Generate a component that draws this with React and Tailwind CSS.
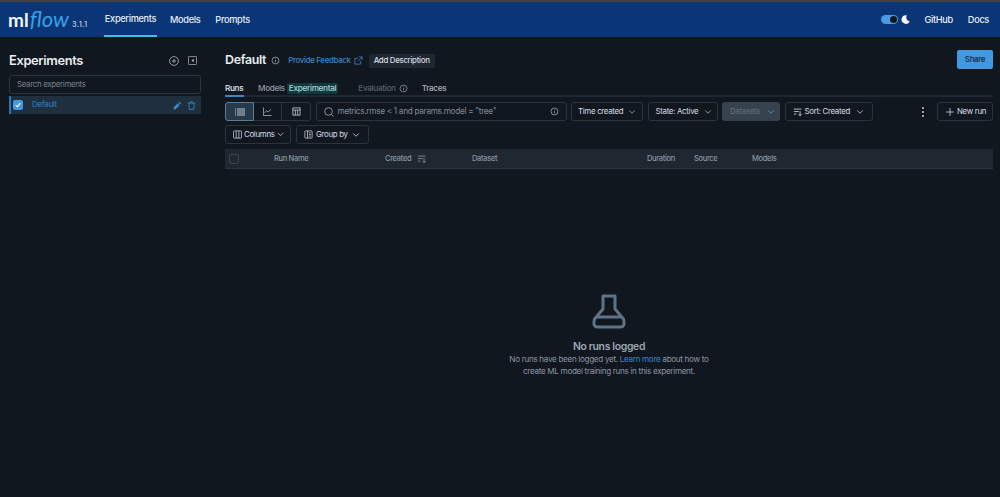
import React from "react";
import { ChevronDown, Plus } from "lucide-react";

function SortIcon({ className }) {
  return (
    <svg viewBox="0 0 12 12" className={className} fill="none" stroke="currentColor" strokeWidth="1">
      <path d="M1 2.5h9M1 5.5h6M1 8.5h3M8.5 5v5.5M6.8 8.8l1.7 1.7 1.7-1.7" />
    </svg>
  );
}

function InfoIcon({ className }) {
  return (
    <svg viewBox="0 0 12 12" className={className} fill="none" stroke="currentColor" strokeWidth="1">
      <circle cx="6" cy="6" r="4.6" />
      <path d="M6 5.4v3M6 3.4v1" />
    </svg>
  );
}

function ToolButton({ children, className = "" }) {
  return (
    <div className={"h-[19px] flex items-center whitespace-nowrap rounded-[3px] border border-[#2a343f] text-[7.9px] text-[#d5dde4] " + className}>
      {children}
    </div>
  );
}

function Sidebar() {
  return (
    <aside className="w-[225px] shrink-0 pl-[9px] pr-[24px] pt-[16px]">
      <div className="h-[15px] flex items-center justify-between pr-[4px]">
        <h2 className="text-[12.8px] leading-[15px] font-semibold text-[#e9edf0]">Experiments</h2>
        <div className="flex items-center gap-[9px] text-[#b3bcc5]">
          <svg viewBox="0 0 10 10" className="w-[10px] h-[10px]" fill="none" stroke="currentColor" strokeWidth="0.8">
            <circle cx="5" cy="5" r="4.4" />
            <path d="M5 3v4M3 5h4" />
          </svg>
          <svg viewBox="0 0 10 10" className="w-[9px] h-[9px]" fill="none" stroke="currentColor" strokeWidth="0.8">
            <rect x="0.5" y="0.5" width="9" height="9" rx="0.8" />
            <path d="M6.4 3v4L3.8 5z" fill="currentColor" stroke="none" />
          </svg>
        </div>
      </div>
      <div className="mt-[7px] h-[19px] rounded-[3px] border border-[#2a343f] flex items-center pl-[7px] text-[7.9px] text-[#76828e]">
        Search experiments
      </div>
      <div className="mt-[2px] h-[18px] bg-[#1f2f3e] border-l-[2px] border-[#2a74b8] flex items-center pl-[2px] pr-[5px]">
        <div className="w-[10px] h-[10px] rounded-[2px] bg-[#4299e0] flex items-center justify-center">
          <svg viewBox="0 0 10 10" className="w-[8px] h-[8px]" fill="none" stroke="#fff" strokeWidth="1.4">
            <path d="M2 5.2l2.2 2L8 2.8" />
          </svg>
        </div>
        <span className="ml-[9px] text-[7.9px] text-[#2a74b8] font-medium">Default</span>
        <div className="ml-auto flex items-center gap-[5px] text-[#3c88cc]">
          <svg viewBox="0 0 10 10" className="w-[9px] h-[9px]" fill="currentColor">
            <path d="M7 .9l2.1 2.1-1 1L6 1.9zM5.3 2.6l2.1 2.1L3 9.1.6 9.4.9 7z" />
          </svg>
          <svg viewBox="0 0 10 10" className="w-[9px] h-[9px]" fill="none" stroke="currentColor" strokeWidth="0.9">
            <path d="M1 2.3h8M3.6 2.3V1h2.8v1.3M2 2.3l.5 7h5l.5-7" />
          </svg>
        </div>
      </div>
    </aside>
  );
}

function Toolbar() {
  return (
    <div className="mt-[5px] flex items-center gap-[4.5px]">
      <div className="flex h-[19px]">
        <div className="w-[29px] h-[19px] rounded-l-[3px] bg-[#263a4c] border border-[#5d7b94] flex items-center justify-center text-[#c9d6e0]">
          <svg viewBox="0 0 10 8" className="w-[10px] h-[8px]" fill="none" stroke="currentColor" strokeWidth="0.9">
            <path d="M0 1h1M2 1h8M0 3h1M2 3h8M0 5h1M2 5h8M0 7h1M2 7h8" />
          </svg>
        </div>
        <div className="w-[28px] h-[19px] border-y border-r border-[#2a343f] flex items-center justify-center text-[#c2cbd3]">
          <svg viewBox="0 0 10 10" className="w-[9px] h-[9px]" fill="none" stroke="currentColor" strokeWidth="0.8">
            <path d="M.5.5v9h9M1.8 6.5l2.2-2.4 1.8 1.4L9 2.5" />
          </svg>
        </div>
        <div className="w-[29px] h-[19px] rounded-r-[3px] border-y border-r border-[#2a343f] flex items-center justify-center text-[#c2cbd3]">
          <svg viewBox="0 0 10 10" className="w-[9px] h-[9px]" fill="none" stroke="currentColor" strokeWidth="0.9">
            <rect x="1" y="1" width="8" height="8" />
            <path d="M1 3.4h8M3.7 3.4V9M6.3 3.4V9" />
          </svg>
        </div>
      </div>
      <div className="w-[251px] h-[19px] rounded-[3px] border border-[#2a343f] flex items-center pl-[7px] pr-[7px] text-[8.25px] text-[#7f8b96]">
        <svg viewBox="0 0 10 10" className="w-[10px] h-[10px] text-[#a5afb8]" fill="none" stroke="currentColor" strokeWidth="0.8">
          <circle cx="4.5" cy="4.5" r="3.8" />
          <path d="M7.3 7.3l2.3 2.3" />
        </svg>
        <span className="ml-[4px]">metrics.rmse &lt; 1 and params.model = "tree"</span>
        <InfoIcon className="ml-auto w-[9px] h-[9px] text-[#a5afb8]" />
      </div>
      <ToolButton className="w-[72px] pl-[6px]">
        Time created
        <ChevronDown className="ml-auto mr-[5px] w-[10px] h-[10px] text-[#a5afb8]" />
      </ToolButton>
      <ToolButton className="w-[70px] pl-[7px]">
        State: Active
        <ChevronDown className="ml-auto mr-[4px] w-[10px] h-[10px] text-[#a5afb8]" />
      </ToolButton>
      <div className="w-[58px] h-[19px] rounded-[3px] bg-[#36424e] flex items-center pl-[8px] text-[7.9px] text-[#64717e]">
        Datasets
        <ChevronDown className="ml-auto mr-[4px] w-[10px] h-[10px] text-[#8793a0]" />
      </div>
      <ToolButton className="w-[88px] pl-[7px]">
        <SortIcon className="w-[10px] h-[10px] mr-[2px] text-[#d5dde4]" />
        Sort: Created
        <ChevronDown className="ml-auto mr-[7px] w-[10px] h-[10px] text-[#c2cbd3]" />
      </ToolButton>
      <div className="ml-auto mr-[9px] flex flex-col gap-[2px]">
        <div className="w-[2px] h-[2px] rounded-full bg-[#c2cbd3]"></div>
        <div className="w-[2px] h-[2px] rounded-full bg-[#c2cbd3]"></div>
        <div className="w-[2px] h-[2px] rounded-full bg-[#c2cbd3]"></div>
      </div>
      <ToolButton className="w-[56px] pl-[6px]">
        <Plus className="w-[12px] h-[12px] mr-[1px]" strokeWidth={1.5} />
        New run
      </ToolButton>
    </div>
  );
}

function TableHead() {
  return (
    <div className="mt-[5px] h-[20px] bg-[#1f2831] border-b border-[#2a343f] flex items-center text-[7.5px] font-medium text-[#8a96a2]">
      <div className="ml-[4px] w-[10px] h-[10px] rounded-[2px] border border-[#3a4550]"></div>
      <span className="ml-[35px] w-[111px]">Run Name</span>
      <span className="flex items-center w-[87px]">
        Created
        <SortIcon className="ml-[6px] w-[10px] h-[10px]" />
      </span>
      <span className="w-[175px]">Dataset</span>
      <span className="w-[47px]">Duration</span>
      <span className="w-[58px]">Source</span>
      <span>Models</span>
    </div>
  );
}

export default function App() {
  return (
    <div className="h-[497px] w-[1000px] flex flex-col bg-[#11171f] overflow-hidden tracking-[-0.02em] font-['Inter',sans-serif]">
      <div className="h-[2px] bg-[#3f3f3f]"></div>
      <header className="h-[35px] bg-[#0a3577] flex items-center pl-[8px] pr-[11px] text-white">
        <div className="flex items-baseline w-[96px] tracking-normal">
          <span className="text-[19px] leading-[26px] font-bold text-[#f3f6fa] font-['Lato',sans-serif]">ml</span>
          <span className="ml-[1px] text-[22px] leading-[26px] italic text-[#36a2e6] font-['Lato',sans-serif]">flow</span>
          <span className="ml-[3px] text-[7.5px] font-medium tracking-[0.3px] text-[#c5d2e2]">3.1.1</span>
        </div>
        <nav className="flex h-[35px] text-[9.2px] font-medium text-[#e6edf5]">
          <div className="w-[53px] flex items-center justify-center border-b-[2px] border-[#3ec1ee]">Experiments</div>
          <div className="ml-[13px] flex items-center">Models</div>
          <div className="ml-[15px] flex items-center">Prompts</div>
        </nav>
        <div className="ml-auto flex items-center text-[9.2px] font-medium text-[#e6edf5]">
          <div className="w-[17px] h-[9px] rounded-full bg-[#4a9ae4] flex items-center justify-end pr-[1px]">
            <div className="w-[7px] h-[7px] rounded-full bg-[#11171f]"></div>
          </div>
          <svg viewBox="0 0 10 10" className="ml-[3px] w-[9px] h-[9px]" fill="#f3f6fa">
            <path d="M6.5.4A4.8 4.8 0 1 0 9.8 7 4.4 4.4 0 0 1 6.5.4z" />
          </svg>
          <span className="ml-[14px]">GitHub</span>
          <span className="ml-[15px]">Docs</span>
        </div>
      </header>
      <div className="flex flex-1 min-h-0">
        <Sidebar />
        <main className="flex-1 pr-[7px] flex flex-col">
          <div className="pt-[15px] h-[32px] flex items-center">
            <h1 className="text-[12.4px] font-semibold text-[#e9edf0]">Default</h1>
            <InfoIcon className="ml-[5px] w-[9px] h-[9px] text-[#a5afb8]" />
            <span className="ml-[8px] text-[7.9px] font-medium text-[#3a86c8]">Provide Feedback</span>
            <svg viewBox="0 0 10 10" className="ml-[3px] w-[9px] h-[9px] text-[#3a86c8]" fill="none" stroke="currentColor" strokeWidth="0.9">
              <path d="M7.5 5.5v3.5H1V2.5h3.5M5.5 1H9v3.5M9 1L4.5 5.5" />
            </svg>
            <div className="ml-[6px] h-[14px] px-[5px] rounded-[2px] bg-[#1f2831] flex items-center text-[7.9px] font-medium text-[#d5dde4]">Add Description</div>
            <div className="ml-auto mt-[-2px] w-[36px] h-[19px] rounded-[2px] bg-[#4299e0] flex items-center justify-center text-[7.9px] font-medium text-[#11273c]">Share</div>
          </div>
          <div className="mt-[8px] h-[20px] border-b-[2px] border-[#1f2831] flex items-end text-[8.2px] font-medium">
            <div className="h-[18px] pt-[3px] w-[19px] border-b-[2px] border-[#3a86c8] mb-[-2px] text-[#e4e9ee] flex items-center">Runs</div>
            <div className="ml-[14px] h-[18px] pt-[4px] flex items-center text-[#8f9aa5]">
              Models
              <span className="ml-[2px] h-[11px] px-[2px] rounded-[2px] bg-[#12383f] text-[#a7d6d6] flex items-center">Experimental</span>
            </div>
            <div className="ml-[20px] h-[18px] pt-[4px] flex items-center text-[#55616d]">
              Evaluation
              <InfoIcon className="ml-[3px] w-[9px] h-[9px] text-[#8f9aa5]" />
            </div>
            <div className="ml-[14px] h-[18px] pt-[4px] flex items-center text-[#a8b2bc]">Traces</div>
          </div>
          <Toolbar />
          <div className="mt-[4px] flex gap-[5px]">
            <ToolButton className="w-[66px] pl-[7px]">
              <svg viewBox="0 0 10 10" className="w-[9px] h-[9px] mr-[2px]" fill="none" stroke="currentColor" strokeWidth="0.8">
                <rect x="0.5" y="1" width="9" height="8" rx="0.8" />
                <path d="M3.5 1v8M6.5 1v8" />
              </svg>
              Columns
              <ChevronDown className="ml-[1px] w-[9px] h-[9px]" />
            </ToolButton>
            <ToolButton className="w-[73px] pl-[7px]">
              <svg viewBox="0 0 10 10" className="w-[9px] h-[9px] mr-[3px]" fill="none" stroke="currentColor" strokeWidth="0.8">
                <rect x="1" y="1" width="8" height="8" rx="0.8" />
                <path d="M4 1v8M5.5 3.2h2M5.5 5h2M5.5 6.8h2" />
              </svg>
              Group by
              <ChevronDown className="ml-auto mr-[7px] w-[10px] h-[10px]" />
            </ToolButton>
          </div>
          <TableHead />
          <div className="flex flex-col items-center mt-[125px] text-[#8a96a2]">
            <svg viewBox="0 0 34 36" className="w-[34px] h-[36px] text-[#5f7386]" fill="none" stroke="currentColor" strokeWidth="3" strokeLinejoin="round">
              <path d="M11 2h12v13l8.5 10q2 8-3 8H5.5q-5 0-3-8L11 15z" />
              <path d="M4 23h26" />
            </svg>
            <div className="mt-[10px] text-[10.4px] leading-[14px] font-semibold text-[#9aa6b2]">No runs logged</div>
            <div className="text-[8.15px] leading-[11.5px] text-center text-[#8a96a2]">
              No runs have been logged yet. <span className="text-[#3a86c8]">Learn more</span> about how to
              <br />
              create ML model training runs in this experiment.
            </div>
          </div>
        </main>
      </div>
    </div>
  );
}
